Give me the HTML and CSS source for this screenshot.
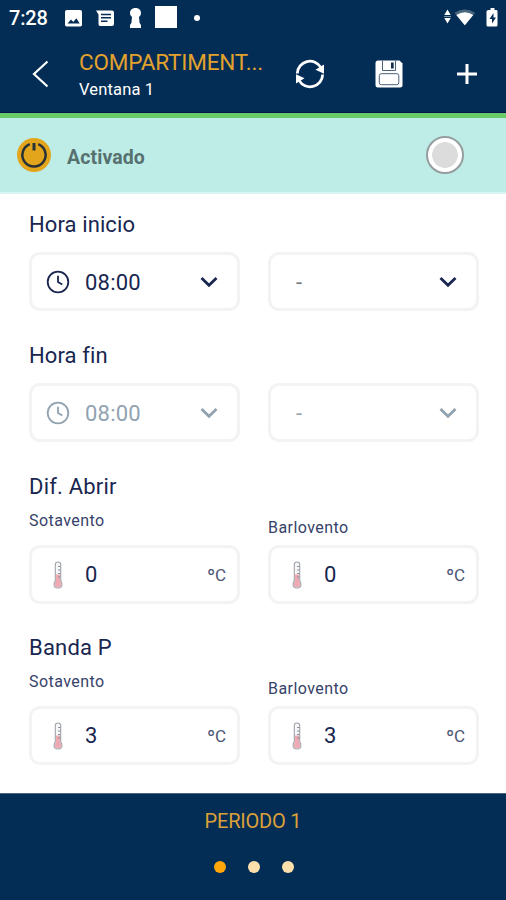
FILE: index.html
```html
<!DOCTYPE html>
<html lang="es">
<head>
<meta charset="utf-8">
<title>Ventana 1</title>
<link rel="stylesheet" href="styles.css">
</head>
<body>
<svg width="0" height="0" class="defs" aria-hidden="true">
  <symbol id="clock" viewBox="0 0 24 24"><g fill="none" stroke="currentColor" stroke-width="1.8"><circle cx="12" cy="12" r="10.3"/><path d="M12 5.8V12l4.3 2.6"/></g></symbol>
  <symbol id="chevron" viewBox="0 0 18 12"><path d="M1.5 2 9 9.2 16.5 2" fill="none" stroke="currentColor" stroke-width="2.8"/></symbol>
  <symbol id="thermo" viewBox="0 0 12 28">
    <path d="M3.3 3.500Q3.300 1 6 1t2.700 2.500V20Q9.900 21 9.900 23.500 9.900 27 6 27T2.100 23.500Q2.100 21 3.300 20Z" fill="#f7f8f9" stroke="#a2a3aa" stroke-width="1.100"/>
    <path d="M4 13.500H8V20.500Q9.200 21.500 9.200 23.500 9.200 26.200 6 26.200T2.800 23.500Q2.800 21.500 4 20.500Z" fill="#efa9b2"/>
    <path d="M6 5.500h2.500M6 9h2.500M6 12.500h2.500M6 16h2.500" stroke="#8b929c" stroke-width="1"/>
  </symbol>
</svg>
<div class="screen">
  <div class="status">
    <span class="time">7:28</span>
    <svg class="s-photo" width="17" height="17" viewBox="0 0 17 17"><rect width="17" height="16.5" rx="1.8" fill="#fff"/><path d="M2.500 13.500 6 9.500l2.300 2.400 3-3.600 3.400 5.200Z" fill="#032d54"/></svg>
    <svg class="s-msg" width="18" height="17" viewBox="0 0 18 17"><path d="M0 .5H16Q18 .5 18 2.500V14Q18 16 16 16H4Q2.500 16 2.500 14V4.500Z" fill="#fff"/><path d="M5 4.400h10M5 7.800h10M5 11.300h6.500" stroke="#032d54" stroke-width="1.500"/></svg>
    <svg class="s-key" width="13" height="20" viewBox="0 0 13 20"><path d="M6.500 0C10 0 12 2.200 12 5c0 2-1 3.200-2 4l.6 6 1.400 2v3H1v-3l1.400-2L3 9C2 8.200 1 7 1 5c0-2.800 2-5 5.500-5Z" fill="#fff"/></svg>
    <span class="s-square"></span>
    <span class="s-dot"></span>
    <svg class="s-right" width="54" height="21" viewBox="0 0 54 21"><path d="M.3 7 3.500 1.500 6.700 7ZM.3 10h6.400L3.500 15.500Z" fill="#fff"/><path d="M0 8.500h7" stroke="#9fb0c0" stroke-width=".8"/><path d="M10.500 4.800Q21 -2 31 4.800L20.800 17.500Z" fill="#49677f"/><path d="M12.300 7Q21 1.500 29.300 7L20.800 17.300Z" fill="#fff"/><path d="M44.500 2h2V0h4v2h2Q53.500 2 53.500 3.500V17Q53.500 18.500 52 18.500H44Q42.500 18.500 42.500 17V3.500Q42.500 2 44.500 2Z" fill="#fff"/><path d="M49.500 5 45.500 11H48v4.500l4-6H49.500Z" fill="#032d54"/></svg>
  </div>
  <header class="bar">
    <svg class="back" width="17" height="28" viewBox="0 0 17 28"><path d="M15.500 1.500 2 14 15.500 26.500" fill="none" stroke="#fff" stroke-width="2.200"/></svg>
    <div class="heading">
      <h1>COMPARTIMENT...</h1>
      <p>Ventana 1</p>
    </div>
    <svg class="sync" width="30" height="30" viewBox="0 0 30 30"><g fill="none" stroke="#fff" stroke-width="2.800"><path d="M2.300 14.500A12.700 12.700 0 0 1 26 8.600"/><path d="M27.700 15.500A12.700 12.700 0 0 1 4 21.400"/></g><path d="M29 5.500V14.800L20.500 10.700ZM1 24.500V15.200L9.500 19.300Z" fill="#fff"/></svg>
    <svg class="save" width="28" height="28" viewBox="0 0 28 28"><path d="M3 .5H24.500L27.500 3.500V25Q27.500 27.500 25 27.500H3Q.5 27.500 .5 25V3Q.5 .5 3 .5Z" fill="#fff"/><g fill="none" stroke="#4b6079" stroke-width="1"><path d="M7.500 .5V10.500H20.500V.5"/><rect x="4.300" y="13.700" width="19.500" height="11" rx="2"/></g><path d="M16 2.500h2.700v6H16Z" fill="#16304f"/></svg>
    <svg class="plus" width="22" height="22" viewBox="0 0 22 22"><path d="M11 1V21M1 11H21" stroke="#fff" stroke-width="3"/></svg>
  </header>
  <div class="active">
    <svg width="34" height="34" viewBox="0 0 34 34"><circle cx="17" cy="17" r="17" fill="#e3a51b"/><path d="M12.800 6.200A11.600 11.600 0 1 0 21.200 6.200" fill="none" stroke="#293238" stroke-width="2.500"/><path d="M17 5V12.500" stroke="#293238" stroke-width="3"/></svg>
    <span class="active-label">Activado</span>
    <span class="radio"></span>
  </div>
  <main>
    <section>
      <h2>Hora inicio</h2>
      <div class="row">
        <div class="box"><svg class="clock"><use href="#clock"/></svg><span class="val">08:00</span><svg class="chev"><use href="#chevron"/></svg></div>
        <div class="box"><span class="dash">-</span><svg class="chev"><use href="#chevron"/></svg></div>
      </div>
    </section>
    <section class="off">
      <h2>Hora fin</h2>
      <div class="row">
        <div class="box"><svg class="clock"><use href="#clock"/></svg><span class="val">08:00</span><svg class="chev"><use href="#chevron"/></svg></div>
        <div class="box"><span class="dash">-</span><svg class="chev"><use href="#chevron"/></svg></div>
      </div>
    </section>
    <section class="temps">
      <h2>Dif. Abrir</h2>
      <div class="row labels"><span>Sotavento</span><span class="low">Barlovento</span></div>
      <div class="row">
        <div class="box"><svg class="thermo"><use href="#thermo"/></svg><span class="val">0</span><span class="unit">ºC</span></div>
        <div class="box"><svg class="thermo"><use href="#thermo"/></svg><span class="val">0</span><span class="unit">ºC</span></div>
      </div>
    </section>
    <section class="temps">
      <h2>Banda P</h2>
      <div class="row labels"><span>Sotavento</span><span class="low">Barlovento</span></div>
      <div class="row">
        <div class="box"><svg class="thermo"><use href="#thermo"/></svg><span class="val">3</span><span class="unit">ºC</span></div>
        <div class="box"><svg class="thermo"><use href="#thermo"/></svg><span class="val">3</span><span class="unit">ºC</span></div>
      </div>
    </section>
  </main>
  <footer>
    <p>PERIODO 1</p>
    <div class="dots"><i class="on"></i><i></i><i></i></div>
  </footer>
</div>
</body>
</html>
```
FILE: styles.css
```css
* { box-sizing: border-box; }
body, h1, h2, p { margin: 0; font-weight: 400; }
body { font-family: Roboto, "Liberation Sans", sans-serif; background: #fff; color: #192650; }
svg { flex: none; }
.defs { display: none; }
.screen { width: 506px; height: 900px; display: flex; flex-direction: column; overflow: hidden; }

.status { flex: none; height: 36px; background: #032d54; color: #fff; display: flex; align-items: center; padding: 0 8px 0 9px; }
.time { width: 56px; font-size: 20px; font-weight: 500; line-height: 36px; letter-spacing: -0.2px; }
.s-msg { margin-left: 14px; }
.s-key { margin-left: 15px; }
.s-square { width: 22px; height: 22px; margin: 0 0 2px 13px; background: #fff; }
.s-dot { width: 6px; height: 6px; margin: 0 0 1px 17px; border-radius: 50%; background: #fff; }
.s-right { margin-left: auto; }

.bar { flex: none; height: 77px; background: #032d54; border-bottom: 1px solid #02174a; display: flex; align-items: center; padding: 0 28px 1px 32px; }
.heading { width: 185px; margin: 4px 0 0 30px; white-space: nowrap; }
.heading h1 { font-size: 22.5px; line-height: 28px; letter-spacing: -0.180px; color: #e3a22d; }
.heading p { font-size: 16.5px; line-height: 27px; letter-spacing: 0.150px; color: #fff; }
.sync { margin-left: 31px; }
.save { margin-left: 50px; }
.plus { margin-left: auto; }

.active { flex: none; height: 81px; border-top: 5px solid #68cb67; background: #beede7; border-bottom: 2px solid #d8f5f6; display: flex; align-items: center; padding: 0 42px 0 17px; }
.active-label { margin: 4px 0 0 16px; font-size: 19.5px; font-weight: 700; letter-spacing: 0.100px; color: #56716f; }
.radio { width: 38px; height: 38px; margin-left: auto; border: 2px solid #969d9e; border-radius: 50%; background: radial-gradient(circle, #dcdcdc 12.500px, #fff 13.200px); }

main { flex: 1; padding: 17px 27px 0 29px; }
section { margin-bottom: 31px; }
section.temps { margin-bottom: 30px; }
section:last-child { margin-bottom: 0; }
h2 { height: 28px; font-size: 22px; line-height: 28px; letter-spacing: 0.100px; white-space: nowrap; }
.temps h2 { letter-spacing: 0.200px; }
.row { display: grid; grid-template-columns: 211px 211px; column-gap: 28px; }
h2 + .row { margin-top: 13px; }
h2 + .labels { margin-top: 7px; height: 37px; font-size: 16px; line-height: 26px; letter-spacing: 0.450px; color: #364269; }
.labels .low { padding-top: 7px; }
.box { height: 59px; border: 3px solid #f3f3f4; border-radius: 11px; display: flex; align-items: center; padding: 0 11px 0 14px; }
.clock { width: 24px; height: 24px; }
.val { margin-left: 15px; font-size: 22px; line-height: 30px; padding-top: 2px; letter-spacing: 0.200px; }
.temps .val { padding-top: 0; }
.chev { width: 18px; height: 12px; margin: 0 8px 0 auto; }
.dash { margin-left: 11px; padding-top: 2px; font-size: 22px; color: #747b80; }
.thermo { width: 12px; height: 28px; margin: 0 6px; }
.unit { margin-left: auto; font-size: 17px; color: #4a5475; }
.off .box { color: #91a2b1; }
.off .dash { color: #9aa5ac; }

footer { flex: none; height: 107px; background: #032d54; border-top: 1px solid #4b6680; text-align: center; }
footer p { margin-top: 14px; font-size: 20px; line-height: 26px; letter-spacing: -0.200px; color: #dca03a; }
.dots { display: flex; justify-content: center; gap: 22px; margin: 27px 0 0 1px; }
.dots i { width: 12px; height: 12px; border-radius: 50%; background: #ffdfac; }
.dots .on { background: #ffa60a; }
```
